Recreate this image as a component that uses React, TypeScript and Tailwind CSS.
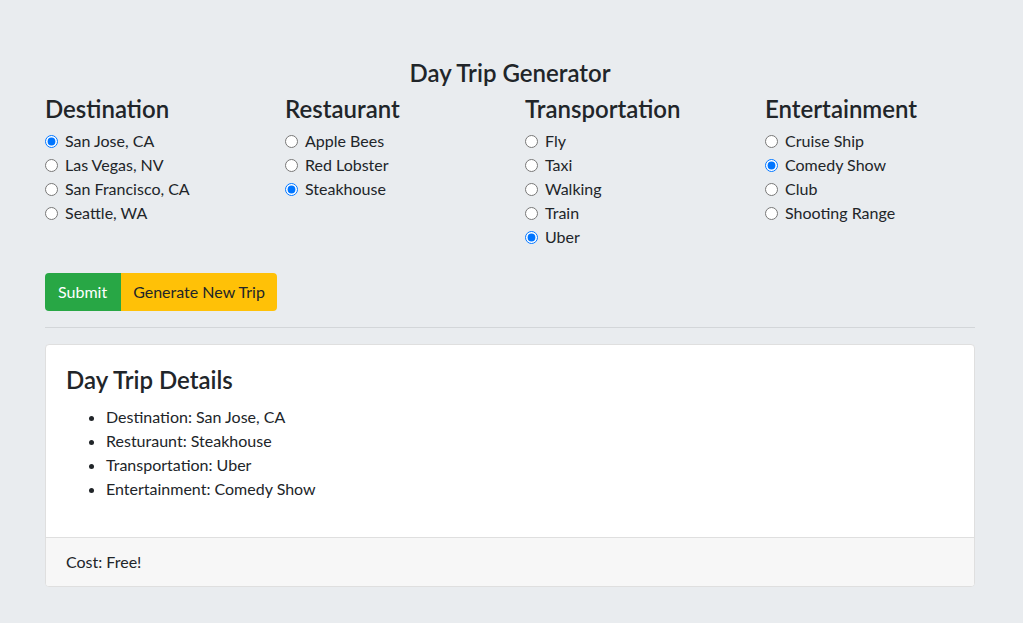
import React from "react";

const FONT = "font-['Segoe_UI','Lato',sans-serif]";

type Group = { title: string; options: string[]; checked: string };

const groups: Group[] = [
  { title: "Destination", options: ["San Jose, CA", "Las Vegas, NV", "San Francisco, CA", "Seattle, WA"], checked: "San Jose, CA" },
  { title: "Restaurant", options: ["Apple Bees", "Red Lobster", "Steakhouse"], checked: "Steakhouse" },
  { title: "Transportation", options: ["Fly", "Taxi", "Walking", "Train", "Uber"], checked: "Uber" },
  { title: "Entertainment", options: ["Cruise Ship", "Comedy Show", "Club", "Shooting Range"], checked: "Comedy Show" },
];

export default function App() {
  return (
    <div className={`min-h-screen bg-[#e9ecef] text-[#212529] text-[16px] leading-[24px] ${FONT}`}>
      <div className="pl-[45px] pt-[58px]">
        <div className="w-[930px]">
          <h4 className="text-center text-[24px] leading-[29px] font-semibold mb-[7px]">Day Trip Generator</h4>
          <div className="grid grid-cols-4 gap-x-[30px]">
            {groups.map((g) => (
              <div key={g.title}>
                <h4 className="text-[24px] leading-[29px] font-semibold mb-[6px]">{g.title}</h4>
                {g.options.map((o) => (
                  <label key={o} className="flex items-center h-[24px]">
                    <input
                      type="radio"
                      name={g.title}
                      defaultChecked={o === g.checked}
                      className="m-0 w-[13px] h-[13px] mr-[7px]"
                    />
                    <span>{o}</span>
                  </label>
                ))}
              </div>
            ))}
          </div>
          <div className="flex mt-[24px]">
            <button className="h-[38px] pl-[13px] pr-[14px] bg-[#28a745] text-white rounded-l-[4px]">Submit</button>
            <button className="h-[38px] px-[12px] bg-[#ffc107] text-[#212529] rounded-r-[4px]">Generate New Trip</button>
          </div>
          <hr className="my-[16px] border-0 border-t border-[#d3d6d9]" />
          <div className="bg-white border border-[#dfdfdf] rounded-[4px] overflow-hidden">
            <div className="px-[20px] pt-[20px] pb-[20px]">
              <h3 className="text-[24px] leading-[29px] font-semibold mb-[11px]">Day Trip Details</h3>
              <ul className="list-disc pl-[40px] mb-[16px]">
                <li>Destination: San Jose, CA</li>
                <li>Resturaunt: Steakhouse</li>
                <li>Transportation: Uber</li>
                <li>Entertainment: Comedy Show</li>
              </ul>
            </div>
            <div className="bg-[#f7f7f7] border-t border-[#dfdfdf] px-[20px] py-[12px]">Cost: Free!</div>
          </div>
        </div>
      </div>
    </div>
  );
}
